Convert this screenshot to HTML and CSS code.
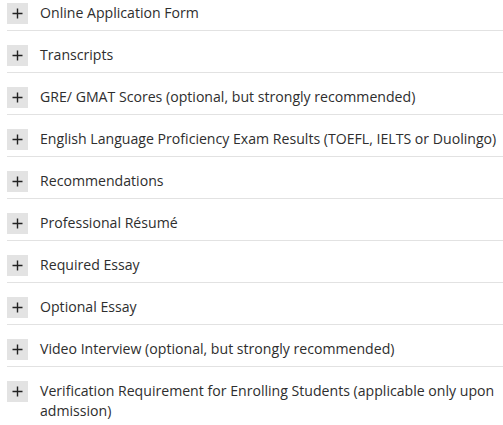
FILE: index.html
```html
<!DOCTYPE html>
<html>
<head>
<meta charset="utf-8">
<link rel="stylesheet" href="styles.css">
</head>
<body>
<ul class="acc">
  <li class="item"><div class="head"><span class="tog"><svg width="11" height="11" viewBox="0 0 11 11"><path d="M5.5 0.5V10.5M0.5 5.5H10.5" stroke="#222" stroke-width="1.4" fill="none"/></svg></span><span class="title">Online Application Form</span></div></li>
  <li class="item"><div class="head"><span class="tog"><svg width="11" height="11" viewBox="0 0 11 11"><path d="M5.5 0.5V10.5M0.5 5.5H10.5" stroke="#222" stroke-width="1.4" fill="none"/></svg></span><span class="title">Transcripts</span></div></li>
  <li class="item"><div class="head"><span class="tog"><svg width="11" height="11" viewBox="0 0 11 11"><path d="M5.5 0.5V10.5M0.5 5.5H10.5" stroke="#222" stroke-width="1.4" fill="none"/></svg></span><span class="title">GRE/ GMAT Scores (optional, but strongly recommended)</span></div></li>
  <li class="item"><div class="head"><span class="tog"><svg width="11" height="11" viewBox="0 0 11 11"><path d="M5.5 0.5V10.5M0.5 5.5H10.5" stroke="#222" stroke-width="1.4" fill="none"/></svg></span><span class="title">English Language Proficiency Exam Results (TOEFL, IELTS or Duolingo)</span></div></li>
  <li class="item"><div class="head"><span class="tog"><svg width="11" height="11" viewBox="0 0 11 11"><path d="M5.5 0.5V10.5M0.5 5.5H10.5" stroke="#222" stroke-width="1.4" fill="none"/></svg></span><span class="title">Recommendations</span></div></li>
  <li class="item"><div class="head"><span class="tog"><svg width="11" height="11" viewBox="0 0 11 11"><path d="M5.5 0.5V10.5M0.5 5.5H10.5" stroke="#222" stroke-width="1.4" fill="none"/></svg></span><span class="title">Professional Résumé</span></div></li>
  <li class="item"><div class="head"><span class="tog"><svg width="11" height="11" viewBox="0 0 11 11"><path d="M5.5 0.5V10.5M0.5 5.5H10.5" stroke="#222" stroke-width="1.4" fill="none"/></svg></span><span class="title">Required Essay</span></div></li>
  <li class="item"><div class="head"><span class="tog"><svg width="11" height="11" viewBox="0 0 11 11"><path d="M5.5 0.5V10.5M0.5 5.5H10.5" stroke="#222" stroke-width="1.4" fill="none"/></svg></span><span class="title">Optional Essay</span></div></li>
  <li class="item"><div class="head"><span class="tog"><svg width="11" height="11" viewBox="0 0 11 11"><path d="M5.5 0.5V10.5M0.5 5.5H10.5" stroke="#222" stroke-width="1.4" fill="none"/></svg></span><span class="title">Video Interview (optional, but strongly recommended)</span></div></li>
  <li class="item last"><div class="head"><span class="tog"><svg width="11" height="11" viewBox="0 0 11 11"><path d="M5.5 0.5V10.5M0.5 5.5H10.5" stroke="#222" stroke-width="1.4" fill="none"/></svg></span><span class="title">Verification Requirement for Enrolling Students (applicable only upon admission)</span></div></li>
</ul>
</body>
</html>
```
FILE: styles.css
```css
html, body {
  margin: 0;
  padding: 0;
  background: #fff;
}
body {
  font-family: "Open Sans", "Liberation Sans", sans-serif;
  font-size: 14.12px;
  color: #2e2e2e;
  overflow: hidden;
}
.acc {
  list-style: none;
  margin: 0;
  padding: 0 0 0 7px;
}
.item {
  padding: 14px 0 6px;
  border-bottom: 1px solid #e2e2e2;
}
.item:first-child {
  padding-top: 3px;
}
.item.last {
  border-bottom: none;
}
.head {
  display: flex;
  align-items: flex-start;
  gap: 12px;
}
.tog {
  flex: 0 0 auto;
  width: 21px;
  height: 21px;
  background: #e3e3e3;
  display: flex;
  align-items: center;
  justify-content: center;
}
.tog svg {
  display: block;
}
.title {
  line-height: 20px;
}
```
